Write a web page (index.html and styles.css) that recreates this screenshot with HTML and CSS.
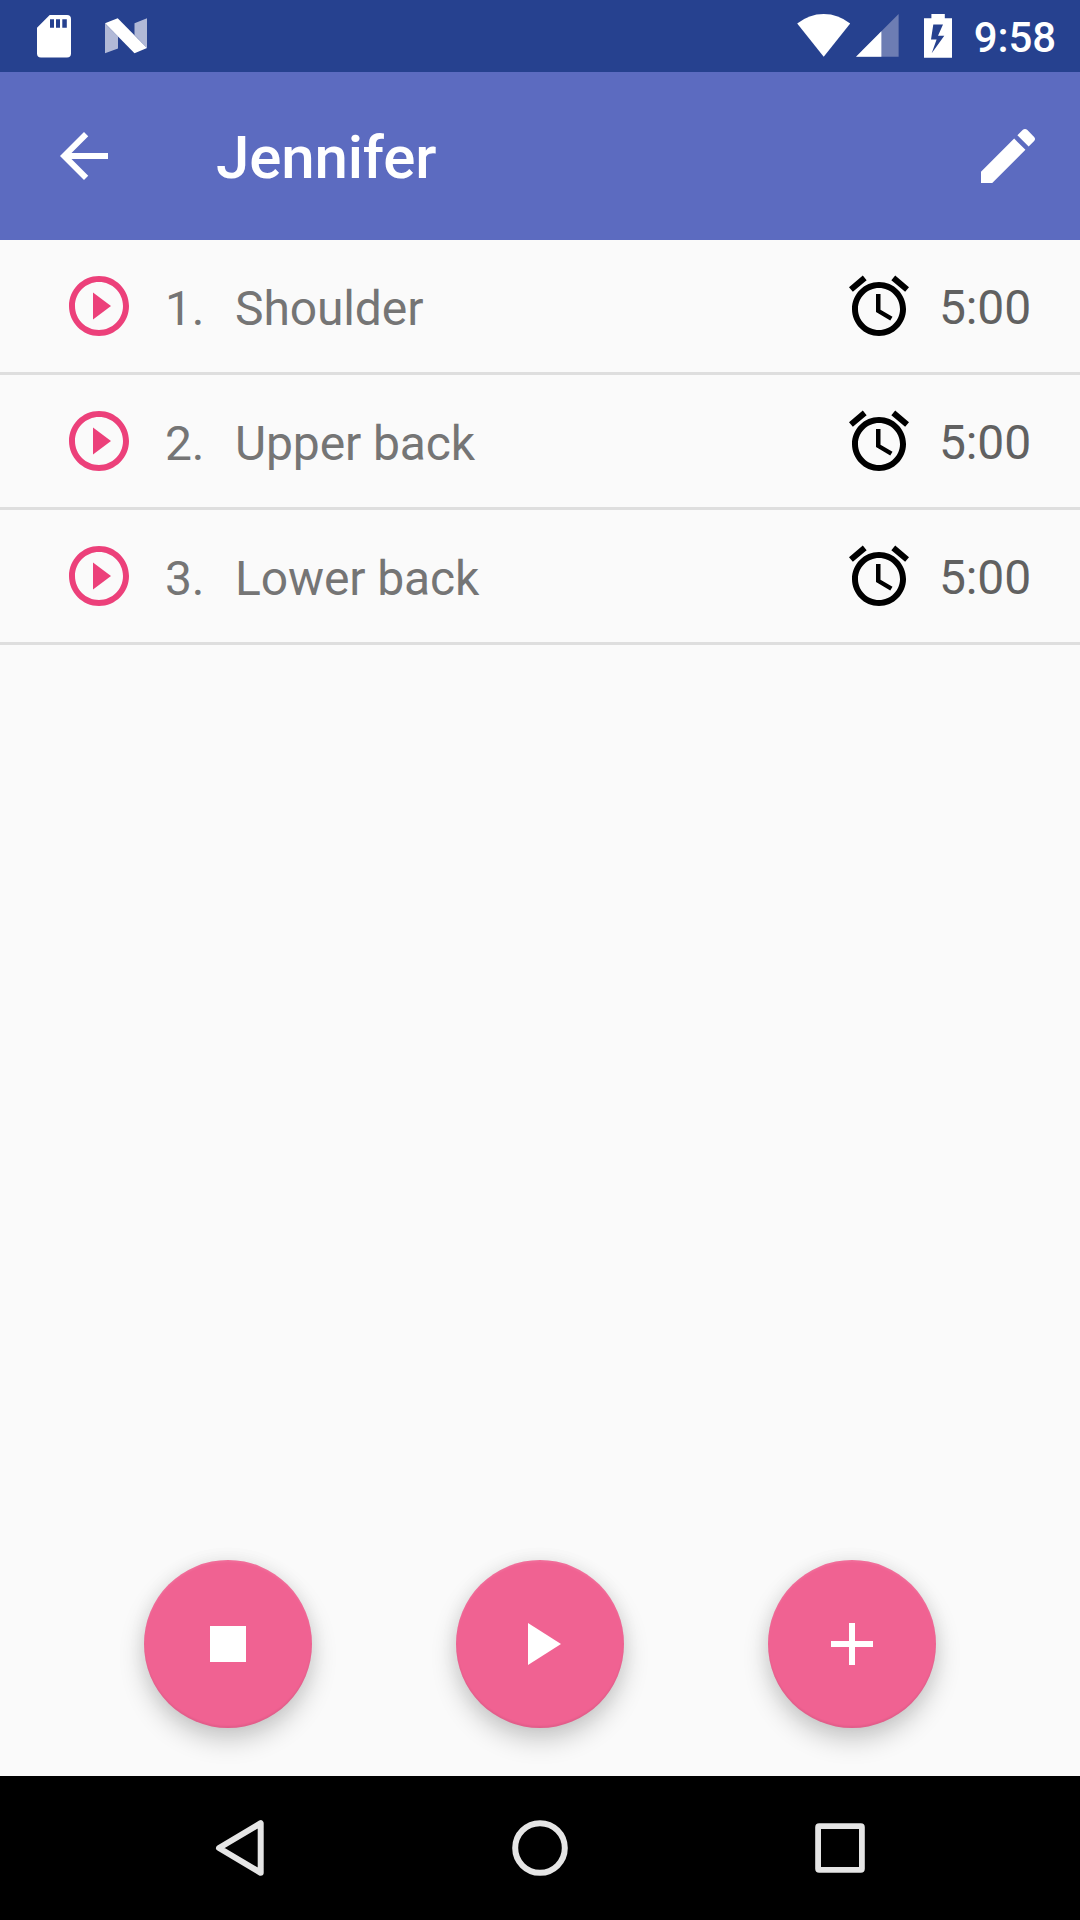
FILE: index.html
```html
<!DOCTYPE html>
<html lang="en">
<head>
<meta charset="utf-8">
<title>Jennifer</title>
<link rel="stylesheet" href="styles.css">
</head>
<body>
<div class="screen">
  <div class="status-bar">
    <div class="status-left">
      <svg class="icon-sd" width="34" height="43" viewBox="0 0 34 43"><path fill="#fff" fill-rule="evenodd" d="M12.7 0H30q4 0 4 4V38.500q0 4-4 4H4q-4 0-4-4V12.700ZM13 4.300v8.500h4V4.300ZM19 4.300v8.500h4V4.300ZM25.300 4.300v8.500h4.500V4.300Z"/></svg>
      <svg class="icon-n" width="42" height="36" viewBox="0 0 42 36"><path fill="#b1b9d7" d="M0 5.500 13 18.500V30.500L0 35.300ZM29.500 5.300 42 .3V30L29.500 17Z"/><path fill="#fff" d="M0 5.300 12.700.2 42 30.100 29.500 35.300Z"/></svg>
    </div>
    <div class="status-right">
      <svg class="icon-wifi" width="54" height="43" viewBox="0 0 54 43"><path fill="#fff" d="M.2 9.600Q12 0 26.700 0T53.200 9.600L26.700 42.800Z"/></svg>
      <svg class="icon-signal" width="43" height="43" viewBox="0 0 43 43"><path fill="#6d7db3" d="M0 42.700 42.600 0V42.700Z"/><path fill="#fff" d="M0 42.700 25.400 17.300V42.700Z"/></svg>
      <svg class="icon-battery" width="28" height="44" viewBox="0 0 28 44"><path fill="#fff" fill-rule="evenodd" d="M7.400 0H20.800V4.200H28V43.800H0V4.200H7.400ZM9.300 10.500 7 25.500H12.600L7.700 39.300 20.300 21.700H14L19 10.500Z"/></svg>
      <span class="clock">9:58</span>
    </div>
  </div>
  <header class="toolbar">
    <svg class="icon" viewBox="0 0 24 24"><path fill="#fff" d="M20 11H7.830l5.590-5.590L12 4l-8 8 8 8 1.410-1.410L7.830 13H20v-2z"/></svg>
    <h1 class="title">Jennifer</h1>
    <svg class="icon" viewBox="0 0 24 24"><path fill="#fff" d="M3 17.250V21h3.750L17.810 9.940l-3.750-3.750L3 17.250zM20.710 7.040c.39-.39.39-1.020 0-1.410l-2.340-2.340c-.39-.39-1.020-.39-1.410 0l-1.830 1.830 3.750 3.750 1.830-1.830z"/></svg>
  </header>
  <main class="content">
    <div class="row">
      <svg class="icon" viewBox="0 0 24 24"><path fill="#ec407a" d="M10 16.500l6-4.500-6-4.500v9zM12 2C6.480 2 2 6.480 2 12s4.480 10 10 10 10-4.480 10-10S17.520 2 12 2zm0 18c-4.410 0-8-3.590-8-8s3.590-8 8-8 8 3.590 8 8-3.590 8-8 8z"/></svg>
      <span class="number">1.</span><span class="name">Shoulder</span>
      <svg class="icon" viewBox="0 0 24 24"><path d="M22 5.720l-4.600-3.860-1.290 1.530 4.600 3.860L22 5.720zM7.880 3.390L6.600 1.860 2 5.710l1.290 1.530 4.590-3.850zM12.500 8H11v6l4.750 2.850.75-1.230-4-2.370V8zM12 4c-4.970 0-9 4.030-9 9s4.020 9 9 9c4.970 0 9-4.030 9-9s-4.030-9-9-9zm0 16c-3.870 0-7-3.130-7-7s3.130-7 7-7 7 3.130 7 7-3.130 7-7 7z"/></svg>
      <span class="time">5:00</span>
    </div>
    <div class="row">
      <svg class="icon" viewBox="0 0 24 24"><path fill="#ec407a" d="M10 16.500l6-4.500-6-4.500v9zM12 2C6.480 2 2 6.480 2 12s4.480 10 10 10 10-4.480 10-10S17.520 2 12 2zm0 18c-4.410 0-8-3.590-8-8s3.590-8 8-8 8 3.590 8 8-3.590 8-8 8z"/></svg>
      <span class="number">2.</span><span class="name">Upper back</span>
      <svg class="icon" viewBox="0 0 24 24"><path d="M22 5.720l-4.600-3.860-1.290 1.530 4.600 3.860L22 5.720zM7.880 3.390L6.600 1.860 2 5.710l1.290 1.530 4.590-3.850zM12.500 8H11v6l4.750 2.850.75-1.230-4-2.370V8zM12 4c-4.970 0-9 4.030-9 9s4.020 9 9 9c4.970 0 9-4.030 9-9s-4.030-9-9-9zm0 16c-3.870 0-7-3.130-7-7s3.130-7 7-7 7 3.130 7 7-3.130 7-7 7z"/></svg>
      <span class="time">5:00</span>
    </div>
    <div class="row">
      <svg class="icon" viewBox="0 0 24 24"><path fill="#ec407a" d="M10 16.500l6-4.500-6-4.500v9zM12 2C6.480 2 2 6.480 2 12s4.480 10 10 10 10-4.480 10-10S17.520 2 12 2zm0 18c-4.410 0-8-3.590-8-8s3.590-8 8-8 8 3.590 8 8-3.590 8-8 8z"/></svg>
      <span class="number">3.</span><span class="name">Lower back</span>
      <svg class="icon" viewBox="0 0 24 24"><path d="M22 5.720l-4.600-3.860-1.290 1.530 4.600 3.860L22 5.720zM7.880 3.390L6.600 1.860 2 5.710l1.290 1.530 4.590-3.850zM12.500 8H11v6l4.750 2.850.75-1.230-4-2.370V8zM12 4c-4.970 0-9 4.030-9 9s4.020 9 9 9c4.970 0 9-4.030 9-9s-4.030-9-9-9zm0 16c-3.870 0-7-3.130-7-7s3.130-7 7-7 7 3.130 7 7-3.130 7-7 7z"/></svg>
      <span class="time">5:00</span>
    </div>
  </main>
  <div class="actions">
    <button class="fab" aria-label="Stop"><svg class="icon" viewBox="0 0 24 24"><path fill="#fff" d="M6 6h12v12H6z"/></svg></button>
    <button class="fab" aria-label="Play"><svg class="icon" viewBox="0 0 24 24"><path fill="#fff" d="M8 5v14l11-7z"/></svg></button>
    <button class="fab" aria-label="Add"><svg class="icon" viewBox="0 0 24 24"><path fill="#fff" d="M19 13h-6v6h-2v-6H5v-2h6V5h2v6h6v2z"/></svg></button>
  </div>
  <nav class="nav-bar">
    <svg class="nav-icon" viewBox="0 0 80 80"><path d="M60.700 15.200V64.800L19 40Z"/></svg>
    <svg class="nav-icon" viewBox="0 0 80 80"><circle cx="40" cy="40" r="24.800"/></svg>
    <svg class="nav-icon" viewBox="0 0 80 80"><path fill="#e5e5e5" stroke="none" fill-rule="evenodd" d="M19.200 15.200H60.800q4 0 4 4V60.800q0 4-4 4H19.200q-4 0-4-4V19.200q0-4 4-4ZM21 21V59H59V21Z"/></svg>
  </nav>
</div>
</body>
</html>
```
FILE: styles.css
```css
* { box-sizing: border-box; }

body {
  margin: 0;
  font-family: Roboto, sans-serif;
}

svg { display: block; flex: none; }

.screen {
  display: flex;
  flex-direction: column;
  width: 1080px;
  height: 1920px;
  background: #fafafa;
}

.status-bar {
  display: flex;
  justify-content: space-between;
  height: 72px;
  padding: 14px 24px 0 37px;
  background: #26418f;
}

.status-left,
.status-right { display: flex; align-items: flex-start; }

.icon-sd { margin-top: 1px; }
.icon-n { margin: 4px 0 0 34px; }
.icon-signal { margin-left: 5px; }
.icon-battery { margin-left: 25px; }

.clock {
  margin-left: 22px;
  color: #fff;
  font-size: 42px;
  font-weight: 500;
  line-height: 48px;
  letter-spacing: -.1px;
}

.toolbar {
  display: flex;
  align-items: center;
  height: 168px;
  padding: 0 36px 0 48px;
  background: #5c6bc0;
}

.icon { width: 72px; height: 72px; }

.title {
  flex: 1;
  margin: 4px 0 0 96px;
  color: #fff;
  font-size: 60px;
  font-weight: 500;
  line-height: 70px;
  letter-spacing: -.15px;
}

.content { flex: 1; }

.row {
  display: flex;
  align-items: center;
  height: 135px;
  padding: 0 48px 0 63px;
  border-bottom: 3px solid #dedede;
  font-size: 48px;
  line-height: 56px;
  letter-spacing: -.12px;
}

.number {
  width: 70px;
  margin: 6px 0 0 30px;
  color: #757575;
}

.name {
  flex: 1;
  margin-top: 6px;
  color: #757575;
}

.time {
  width: 93px;
  margin: 4px 0 0 24px;
  color: #616161;
}

.actions {
  display: flex;
  justify-content: space-between;
  padding: 0 144px 48px;
}

.fab {
  display: flex;
  align-items: center;
  justify-content: center;
  width: 168px;
  height: 168px;
  padding: 0;
  border: 0;
  border-radius: 50%;
  background: #f06292;
  box-shadow: 0 12px 26px rgba(0, 0, 0, .2), 0 0 18px rgba(0, 0, 0, .06), inset 0 -2px 2px rgba(0, 0, 0, .06), inset 0 2px 2px rgba(255, 255, 255, .08);
}

.nav-bar {
  display: flex;
  align-items: center;
  justify-content: center;
  gap: 220px;
  height: 144px;
  background: #000;
}

.nav-icon {
  width: 80px;
  height: 80px;
  fill: none;
  stroke: #e5e5e5;
  stroke-width: 6;
  stroke-linejoin: round;
}
```
